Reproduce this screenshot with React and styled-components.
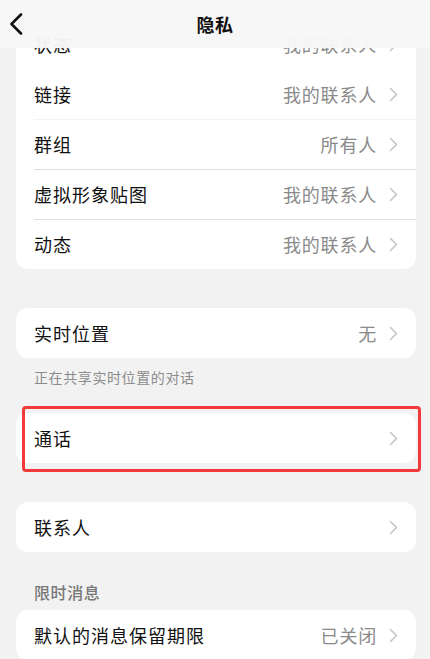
import React from "react";
import styled, { createGlobalStyle } from "styled-components";

const Global = createGlobalStyle`
  html, body { margin: 0; padding: 0; background: #f2f2f2; }
  body {
    font-family: "PingFang SC", "Noto Sans CJK SC", "Noto Sans", sans-serif;
    -webkit-font-smoothing: antialiased;
  }
`;

const Page = styled.div`
  width: 430px;
  height: 659px;
  overflow: hidden;
  position: relative;
  background: #f2f2f2;
`;

const Header = styled.header`
  position: absolute;
  top: 0;
  left: 0;
  right: 0;
  height: 48px;
  background: rgba(247, 247, 247, 0.97);
  display: flex;
  align-items: center;
  justify-content: center;
  z-index: 5;
`;

const BackButton = styled.div`
  position: absolute;
  left: 6px;
  top: 12px;
  width: 20px;
  height: 24px;
  display: flex;
  align-items: center;
  justify-content: center;
`;

const Title = styled.h1`
  margin: 0;
  font-size: 18px;
  font-weight: 700;
  color: #111;
  letter-spacing: 0.5px;
`;

const Content = styled.div`
  display: flex;
  flex-direction: column;
  padding: 19px 14px 0 16px;
`;

const Card = styled.div`
  position: relative;
  background: #fff;
  border-radius: 12px;
  overflow: hidden;
  margin-top: ${(p) => p.$mt || 0}px;
`;

const lineColors = { none: "transparent", faint: "#f3f3f3", normal: "#dedede" };

const Row = styled.div`
  height: 50px;
  display: flex;
  align-items: center;
  padding-left: 18px;
  padding-right: 18px;
  position: relative;
  &:not(:first-child)::before {
    content: "";
    position: absolute;
    top: 0;
    left: 18px;
    right: 0;
    height: 1px;
    background: ${(p) => lineColors[p.$line || "normal"]};
  }
`;

const Label = styled.span`
  flex: 1;
  font-size: 18px;
  color: #111;
  letter-spacing: 1px;
`;

const Value = styled.span`
  font-size: 18px;
  color: #8a8a8a;
  letter-spacing: 0.8px;
  margin-right: 12px;
`;

const Note = styled.div`
  font-size: 14px;
  color: #8c8c8c;
  letter-spacing: 0.6px;
  padding-left: 18px;
  margin-top: 9px;
  line-height: 20px;
`;

const SectionTitle = styled.div`
  font-size: 16px;
  font-weight: 500;
  color: #777;
  letter-spacing: 0.6px;
  padding-left: 18px;
  margin-top: 29px;
  line-height: 22px;
`;

const Highlight = styled.div`
  position: absolute;
  left: 22px;
  top: 406px;
  width: 399px;
  height: 66px;
  box-sizing: border-box;
  border: 3px solid #f2393b;
  border-radius: 4px;
  z-index: 4;
`;

const Chevron = () => (
  <svg width="9" height="15" viewBox="0 0 9 15">
    <path d="M1.5 1.5 L7.5 7.5 L1.5 13.5" fill="none" stroke="#c5c5c5" strokeWidth="1.6" strokeLinecap="round" strokeLinejoin="round" />
  </svg>
);

const Item = ({ label, value, line }) => (
  <Row $line={line}>
    <Label>{label}</Label>
    {value && <Value>{value}</Value>}
    <Chevron />
  </Row>
);

export default function App() {
  return (
    <Page>
      <Global />
      <Header>
        <BackButton>
          <svg width="14" height="22" viewBox="0 0 14 22">
            <path d="M12 1.5 L2.5 11 L12 20.5" fill="none" stroke="#111" strokeWidth="2.6" strokeLinecap="round" strokeLinejoin="round" />
          </svg>
        </BackButton>
        <Title>隐私</Title>
      </Header>
      <Content>
        <Card>
          <Item label="状态" value="我的联系人" />
          <Item label="链接" value="我的联系人" line="none" />
          <Item label="群组" value="所有人" line="faint" />
          <Item label="虚拟形象贴图" value="我的联系人" />
          <Item label="动态" value="我的联系人" />
        </Card>
        <Card $mt={39}>
          <Item label="实时位置" value="无" />
        </Card>
        <Note>正在共享实时位置的对话</Note>
        <Card $mt={26}>
          <Item label="通话" />
        </Card>
        <Card $mt={39}>
          <Item label="联系人" />
        </Card>
        <SectionTitle>限时消息</SectionTitle>
        <Card $mt={7}>
          <Item label="默认的消息保留期限" value="已关闭" />
        </Card>
      </Content>
      <Highlight />
    </Page>
  );
}
